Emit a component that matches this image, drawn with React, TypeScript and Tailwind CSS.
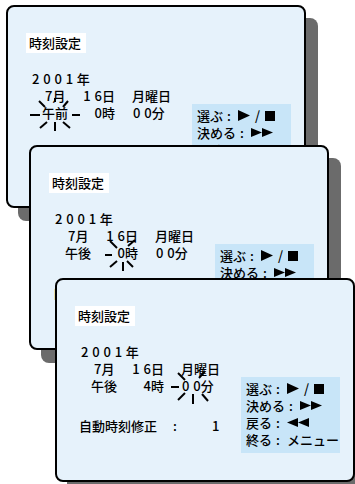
import React from "react";

type Seg = [number, number, number, number];

const Play = () => (
  <svg width="12" height="11" viewBox="0 0 12 11" className="block">
    <polygon points="0,0 12,5.5 0,11" fill="black" />
  </svg>
);
const Square = () => (
  <svg width="10" height="10" viewBox="0 0 10 10" className="block">
    <rect x="0" y="0" width="10" height="10" fill="black" />
  </svg>
);
const FF = () => (
  <svg width="22" height="9" viewBox="0 0 22 9" className="block">
    <polygon points="0,0 11,4.5 0,9" fill="black" />
    <polygon points="11,0 22,4.5 11,9" fill="black" />
  </svg>
);
const RW = () => (
  <svg width="22" height="9" viewBox="0 0 22 9" className="block">
    <polygon points="11,0 0,4.5 11,9" fill="black" />
    <polygon points="22,0 11,4.5 22,9" fill="black" />
  </svg>
);

const Colon = () => <span className="ml-[4px] mr-[7px]">:</span>;

function Help() {
  return (
    <div className="mt-[97px] w-[99px] h-[76px] shrink-0 bg-[#c8e5f8] pt-[3px] pl-[5px] leading-[17px]">
      <div className="flex items-center h-[17px]">
        選ぶ<Colon />
        <Play />
        <span className="mx-[5px]">/</span>
        <Square />
      </div>
      <div className="flex items-center h-[17px]">
        決める<Colon />
        <FF />
      </div>
      <div className="flex items-center h-[17px]">
        戻る<Colon />
        <RW />
      </div>
      <div className="flex items-center h-[17px]">
        終る<Colon />
        メニュー
      </div>
    </div>
  );
}

function Blink({ segs }: { segs: Seg[] }) {
  return (
    <svg className="absolute left-0 top-0 pointer-events-none" width="296" height="200">
      {segs.map((s, i) => (
        <line key={i} x1={s[0]} y1={s[1]} x2={s[2]} y2={s[3]} stroke="black" strokeWidth="2" />
      ))}
    </svg>
  );
}

function Screen({
  pos,
  ampm,
  hour,
  segs,
}: {
  pos: string;
  ampm: string;
  hour: string;
  segs: Seg[];
}) {
  return (
    <div
      className={`absolute ${pos} w-[300px] rounded-[8px] border-2 border-black bg-[#e6f2fb] shadow-[12px_13px_0_#6b6b6b] text-[13px] font-medium text-black`}
    >
      <div className="flex pl-[18px]">
        <div className="w-[166px] shrink-0 flex flex-col">
          <div className="mt-[26px] w-[60px] h-[20px] bg-white leading-[20px] pl-[3px]">時刻設定</div>
          <div className="mt-[17px] ml-[6px] h-[18px] leading-[18px]">
            <span className="tracking-[3.8px]">2001</span>年
          </div>
          <div className="ml-[6px] grid grid-cols-[50px_33px_auto] h-[17px] leading-[15px]">
            <div className="pl-[13px]">7月</div>
            <div className="text-right">
              <span className="tracking-[3.8px]">1</span>6日
            </div>
            <div className="pl-[17px]">月曜日</div>
          </div>
          <div className="ml-[6px] grid grid-cols-[50px_33px_auto] h-[15px] leading-[15px]">
            <div className="pl-[10px]">{ampm}</div>
            <div className="text-right">{hour}時</div>
            <div className="pl-[18px]">
              <span className="tracking-[3.8px]">0</span>0分
            </div>
          </div>
          <div className="mt-[25px] ml-[4px] flex h-[15px] leading-[15px]">
            <span className="w-[94px]">自動時刻修正</span>
            <span className="w-[39px]">:</span>
            <span>1</span>
          </div>
        </div>
        <Help />
      </div>
      <Blink segs={segs} />
    </div>
  );
}

export default function App() {
  return (
    <div className="relative w-[355px] h-[484px] overflow-hidden bg-white font-['Noto_Sans_CJK_JP',sans-serif]">
      <Screen
        pos="left-[6px] top-[5px] h-[203px]"
        ampm="午前"
        hour="0"
        segs={[
          [22, 108, 32, 108],
          [64, 108, 72, 108],
          [47, 91, 47, 95],
          [31, 94, 37, 100],
          [60, 94, 55, 100],
          [32, 121, 39, 115],
          [62, 121, 55, 115],
          [47, 115, 47, 124],
        ]}
      />
      <Screen
        pos="left-[29px] top-[145px] h-[205px]"
        ampm="午後"
        hour="0"
        segs={[
          [74, 108, 81, 108],
          [79, 94, 86, 101],
          [104, 93, 97, 99],
          [79, 120, 86, 114],
          [92, 115, 92, 124],
          [102, 120, 96, 114],
        ]}
      />
      <Screen
        pos="left-[55px] top-[278px] h-[204px]"
        ampm="午後"
        hour="4"
        segs={[
          [114, 107, 122, 107],
          [121, 93, 128, 100],
          [148, 91, 142, 98],
          [121, 120, 128, 113],
          [136, 114, 136, 124],
          [151, 121, 145, 114],
        ]}
      />
    </div>
  );
}
